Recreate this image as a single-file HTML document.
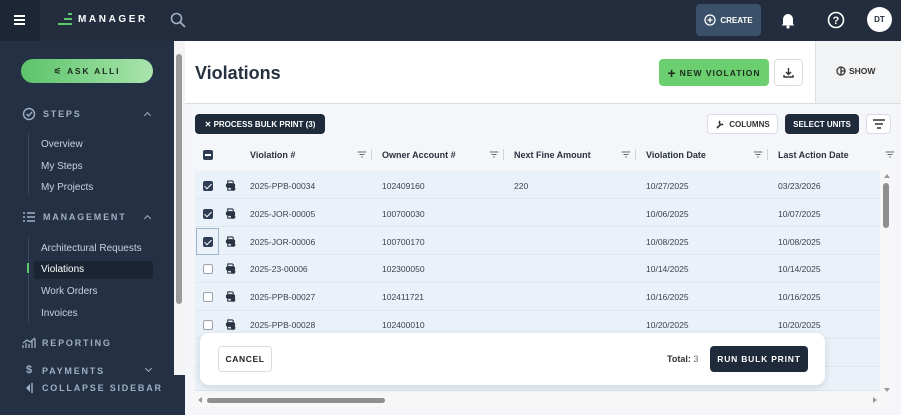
<!DOCTYPE html>
<html><head><style>
*{box-sizing:border-box;margin:0;padding:0}
body{width:901px;height:415px;overflow:hidden;font-family:"Liberation Sans",sans-serif;background:#f4f6f9;position:relative}
.abs{position:absolute}
.top{left:0;top:0;width:901px;height:41px;background:#232d3d}
.side{left:0;top:41px;width:185px;height:374px;background:#243043}
.sb{color:#9fb0c4;font-size:9px;font-weight:bold;letter-spacing:1.8px}
.si{color:#c9d2dd;font-size:10px}
.th{font-size:9px;font-weight:bold;color:#2a3342;top:150px}
.td{font-size:8.5px;color:#3a4250}
.row{left:195px;width:685px;height:28px;background:#eaf1f9;border-bottom:1px solid #dfe6ee}
.cb{width:10px;height:10px;border-radius:2px;left:203px}
.on{background:#2f3e55}
.on::after{content:"";position:absolute;left:3px;top:1px;width:3px;height:6px;border:solid #fff;border-width:0 1.5px 1.5px 0;transform:rotate(45deg)}
.off{border:1px solid #9aa3ae;background:#fff}
.btn{font-weight:bold;font-size:8.5px;display:flex;align-items:center;justify-content:center;border-radius:4px}
.flt{top:150px}
.chev{width:5px;height:5px;border:solid #9fb0c4;border-width:1.5px 0 0 1.5px;transform:rotate(45deg)}
</style></head><body>
<svg width="0" height="0" style="position:absolute"><defs>
<symbol id="pr" viewBox="0 0 12 12"><path d="M3 1h5l1 1v2H3z" fill="none" stroke="#2a3342" stroke-width="1.2"/><rect x="1" y="4" width="10" height="4" rx="1" fill="#2a3342"/><rect x="3" y="8" width="4" height="3" fill="none" stroke="#2a3342" stroke-width="1.2"/><circle cx="9" cy="9.5" r="2.3" fill="#2a3342"/></symbol>
<symbol id="fl" viewBox="0 0 12 10"><path d="M1 2h10M3 5h6M5 8h2" stroke="#666" stroke-width="1.2"/></symbol>
</defs></svg>
<div class="abs top"></div>
<div class="abs" style="left:0;top:0;width:40px;height:41px;background:#1d2635"></div>
<div class="abs" style="left:14px;top:15px;width:11px;height:2px;background:#fff;box-shadow:0 4px #fff,0 8px #fff"></div>
<div class="abs" style="left:58px;top:23px;width:14px;height:2px;background:#5cc96a"></div>
<div class="abs" style="left:64px;top:18px;width:8px;height:2px;background:#5cc96a"></div>
<div class="abs" style="left:68px;top:13px;width:4px;height:2px;background:#5cc96a"></div>
<div class="abs" style="left:78px;top:14px;color:#fff;font-weight:bold;font-size:10px;letter-spacing:2.6px">MANAGER</div>
<svg class="abs" style="left:170px;top:12px" width="16" height="16"><circle cx="6.5" cy="6.5" r="5" fill="none" stroke="#9fb0c4" stroke-width="1.6"/><path d="M10 10l5 5" stroke="#9fb0c4" stroke-width="1.8"/></svg>
<div class="abs btn" style="left:696px;top:4px;width:65px;height:32px;background:#3b5169;color:#fff;font-size:8px"><svg width="12" height="12" style="margin-right:4px"><circle cx="6" cy="6" r="5" fill="none" stroke="#fff" stroke-width="1.3"/><path d="M6 3.5v5M3.5 6h5" stroke="#fff" stroke-width="1.3"/></svg>CREATE</div>
<svg class="abs" style="left:780px;top:11px" width="16" height="18"><path d="M3 13V8a5 5 0 0110 0v5l1.5 1.5h-13z" fill="#fff"/><circle cx="8" cy="16" r="1.6" fill="#fff"/></svg>
<svg class="abs" style="left:827px;top:11px" width="18" height="18"><circle cx="9" cy="9" r="7.5" fill="none" stroke="#fff" stroke-width="1.6"/><text x="9" y="13" font-size="11" font-weight="bold" fill="#fff" text-anchor="middle" font-family="Liberation Sans">?</text></svg>
<div class="abs btn" style="left:867px;top:7px;width:25px;height:25px;border-radius:50%;background:#fff;color:#232d3d;font-size:8px">DT</div>

<div class="abs side"></div>
<div class="abs" style="left:174px;top:41px;width:11px;height:334px;background:#f4f4f4"></div>
<div class="abs" style="left:176px;top:54px;width:6px;height:250px;background:#9a9a9a;border-radius:3px"></div>
<div class="abs btn" style="left:21px;top:59px;width:132px;height:24px;border-radius:12px;background:linear-gradient(90deg,#5cc46a,#a9e4ad);color:#1d2a1e;font-size:8.5px;letter-spacing:1.8px">⚟ ASK ALLI</div>
<svg class="abs" style="left:22px;top:107px" width="14" height="14"><circle cx="7" cy="7" r="5.5" fill="none" stroke="#9fb0c4" stroke-width="1.4"/><path d="M4.5 7l2 2 3.5-4" fill="none" stroke="#9fb0c4" stroke-width="1.4"/></svg>
<div class="abs sb" style="left:43px;top:109px">STEPS</div>
<div class="abs chev" style="left:145px;top:113px"></div>
<div class="abs" style="left:28px;top:133px;width:1px;height:62px;background:#3d4a5c"></div>
<div class="abs si" style="left:41px;top:139px">Overview</div>
<div class="abs si" style="left:41px;top:161px">My Steps</div>
<div class="abs si" style="left:41px;top:182px">My Projects</div>
<svg class="abs" style="left:23px;top:212px" width="12" height="10"><path d="M0 1h2M4 1h8M0 5h2M4 5h8M0 9h2M4 9h8" stroke="#9fb0c4" stroke-width="1.6"/></svg>
<div class="abs sb" style="left:43px;top:212px">MANAGEMENT</div>
<div class="abs chev" style="left:145px;top:216px"></div>
<div class="abs" style="left:28px;top:237px;width:1px;height:86px;background:#3d4a5c"></div>
<div class="abs" style="left:27px;top:263px;width:2px;height:10px;background:#5cc96a"></div>
<div class="abs si" style="left:41px;top:243px">Architectural Requests</div>
<div class="abs" style="left:34px;top:261px;width:119px;height:18px;background:#1b2433;border-radius:3px"></div>
<div class="abs si" style="left:41px;top:264px;color:#fff">Violations</div>
<div class="abs si" style="left:41px;top:286px">Work Orders</div>
<div class="abs si" style="left:41px;top:308px">Invoices</div>
<svg class="abs" style="left:22px;top:337px" width="14" height="12"><path d="M1 11V8M4 11V6M7 11V7M10 11V4M13 11V2M1 6l4-3 3 2 5-4" stroke="#9fb0c4" stroke-width="1.3" fill="none"/></svg>
<div class="abs sb" style="left:42px;top:338px">REPORTING</div>
<div class="abs sb" style="left:26px;top:364px;font-size:11px">$</div>
<div class="abs sb" style="left:42px;top:366px">PAYMENTS</div>
<div class="abs chev" style="left:146px;top:366px;transform:rotate(225deg)"></div>
<svg class="abs" style="left:25px;top:382px" width="8" height="12"><path d="M5 2L1 6l4 4z" fill="#9fb0c4"/><path d="M7 1v10" stroke="#9fb0c4" stroke-width="1.4"/></svg>
<div class="abs sb" style="left:42px;top:383px">COLLAPSE SIDEBAR</div>

<div class="abs" style="left:185px;top:41px;width:630px;height:63px;background:#fff;border-bottom:1px solid #d9dde3"></div>
<div class="abs" style="left:815px;top:41px;width:86px;height:63px;background:#f2f3f5;border-left:1px solid #dcdfe4;border-bottom:1px solid #d9dde3"></div>
<div class="abs" style="left:195px;top:63px;font-size:18px;font-weight:bold;color:#263140">Violations</div>
<div class="abs btn" style="left:659px;top:59px;width:110px;height:27px;background:#6ccf6f;color:#1e2a20;letter-spacing:1px"><span style="font-size:14px;margin-right:3px">+</span>NEW VIOLATION</div>
<div class="abs btn" style="left:774px;top:59px;width:29px;height:27px;background:#fff;border:1px solid #d9dde3"><svg width="11" height="11"><path d="M5.5 1v6M3 5l2.5 2.5L8 5M1 8v2h9V8" stroke="#333" stroke-width="1.4" fill="none"/></svg></div>
<div class="abs btn" style="left:836px;top:66px;color:#333"><svg width="10" height="10" style="margin-right:3px"><circle cx="5" cy="5" r="4" fill="none" stroke="#333" stroke-width="1.3"/><path d="M5 1v8M5 5h4" stroke="#333" stroke-width="1.3"/></svg>SHOW</div>

<div class="abs btn" style="left:195px;top:114px;width:130px;height:20px;background:#1f2a3a;color:#fff;font-size:8px">✕ PROCESS BULK PRINT (3)</div>
<div class="abs btn" style="left:707px;top:114px;width:71px;height:20px;background:#fff;border:1px solid #d9dde3;color:#333;font-size:8px"><svg width="10" height="10" style="margin-right:4px"><path d="M2 9l4-4M5 2a2 2 0 103 3" stroke="#333" stroke-width="1.6" fill="none"/></svg>COLUMNS</div>
<div class="abs btn" style="left:785px;top:114px;width:74px;height:20px;background:#1f2a3a;color:#fff;font-size:8px">SELECT UNITS</div>
<div class="abs btn" style="left:866px;top:114px;width:25px;height:20px;background:#fff;border:1px solid #d9dde3"><svg width="12" height="10"><path d="M0 1h12M2 5h8M4 9h4" stroke="#333" stroke-width="1.4"/></svg></div>

<div class="abs" style="left:203px;top:150px;width:10px;height:10px;background:#2f3e55;border-radius:2px"><div style="margin:4px 2px;height:2px;background:#fff"></div></div>
<div class="abs th" style="left:250px">Violation #</div>
<div class="abs th" style="left:382px">Owner Account #</div>
<div class="abs th" style="left:514px">Next Fine Amount</div>
<div class="abs th" style="left:646px">Violation Date</div>
<div class="abs th" style="left:778px">Last Action Date</div>
<svg class="abs flt" style="left:357px" width="10" height="9"><use href="#fl"/></svg><div class="abs" style="left:371px;top:149px;width:1px;height:11px;background:#d0d5dc"></div>
<svg class="abs flt" style="left:489px" width="10" height="9"><use href="#fl"/></svg><div class="abs" style="left:503px;top:149px;width:1px;height:11px;background:#d0d5dc"></div>
<svg class="abs flt" style="left:621px" width="10" height="9"><use href="#fl"/></svg><div class="abs" style="left:635px;top:149px;width:1px;height:11px;background:#d0d5dc"></div>
<svg class="abs flt" style="left:753px" width="10" height="9"><use href="#fl"/></svg><div class="abs" style="left:767px;top:149px;width:1px;height:11px;background:#d0d5dc"></div>
<svg class="abs flt" style="left:885px" width="10" height="9"><use href="#fl"/></svg>

<div class="abs row" style="top:171px"></div>
<div class="abs row" style="top:199px"></div>
<div class="abs row" style="top:227px"></div>
<div class="abs row" style="top:255px"></div>
<div class="abs row" style="top:283px"></div>
<div class="abs row" style="top:311px"></div>
<div class="abs row" style="top:339px"></div>
<div class="abs row" style="top:367px;height:24px"></div>
<div class="abs" style="left:196px;top:228px;width:23px;height:27px;border:1px solid #9db5cf"></div>

<div class="abs cb on" style="top:181px"></div>
<div class="abs cb on" style="top:209px"></div>
<div class="abs cb on" style="top:237px"></div>
<div class="abs cb off" style="top:264px"></div>
<div class="abs cb off" style="top:292px"></div>
<div class="abs cb off" style="top:320px"></div>
<svg class="abs" style="left:225px;top:180px" width="11" height="11"><use href="#pr"/></svg>
<svg class="abs" style="left:225px;top:208px" width="11" height="11"><use href="#pr"/></svg>
<svg class="abs" style="left:225px;top:236px" width="11" height="11"><use href="#pr"/></svg>
<svg class="abs" style="left:225px;top:263px" width="11" height="11"><use href="#pr"/></svg>
<svg class="abs" style="left:225px;top:291px" width="11" height="11"><use href="#pr"/></svg>
<svg class="abs" style="left:225px;top:319px" width="11" height="11"><use href="#pr"/></svg>

<div class="abs td" style="left:250px;top:181px">2025-PPB-00034</div><div class="abs td" style="left:382px;top:181px">102409160</div><div class="abs td" style="left:514px;top:181px">220</div><div class="abs td" style="left:646px;top:181px">10/27/2025</div><div class="abs td" style="left:778px;top:181px">03/23/2026</div>
<div class="abs td" style="left:250px;top:209px">2025-JOR-00005</div><div class="abs td" style="left:382px;top:209px">100700030</div><div class="abs td" style="left:646px;top:209px">10/06/2025</div><div class="abs td" style="left:778px;top:209px">10/07/2025</div>
<div class="abs td" style="left:250px;top:237px">2025-JOR-00006</div><div class="abs td" style="left:382px;top:237px">100700170</div><div class="abs td" style="left:646px;top:237px">10/08/2025</div><div class="abs td" style="left:778px;top:237px">10/08/2025</div>
<div class="abs td" style="left:250px;top:264px">2025-23-00006</div><div class="abs td" style="left:382px;top:264px">102300050</div><div class="abs td" style="left:646px;top:264px">10/14/2025</div><div class="abs td" style="left:778px;top:264px">10/14/2025</div>
<div class="abs td" style="left:250px;top:292px">2025-PPB-00027</div><div class="abs td" style="left:382px;top:292px">102411721</div><div class="abs td" style="left:646px;top:292px">10/16/2025</div><div class="abs td" style="left:778px;top:292px">10/16/2025</div>
<div class="abs td" style="left:250px;top:320px">2025-PPB-00028</div><div class="abs td" style="left:382px;top:320px">102400010</div><div class="abs td" style="left:646px;top:320px">10/20/2025</div><div class="abs td" style="left:778px;top:320px">10/20/2025</div>

<div class="abs" style="left:880px;top:171px;width:12px;height:222px;background:#f7f7f7"></div>
<div class="abs" style="left:883px;top:183px;width:6px;height:45px;background:#8f8f8f;border-radius:3px"></div>
<div class="abs" style="left:884px;top:174px;width:0;height:0;border:3px solid transparent;border-bottom:4px solid #999;border-top:0"></div>
<div class="abs" style="left:884px;top:388px;width:0;height:0;border:3px solid transparent;border-top:4px solid #999;border-bottom:0"></div>
<div class="abs" style="left:195px;top:393px;width:697px;height:14px;background:#f7f7f7"></div>
<div class="abs" style="left:207px;top:398px;width:178px;height:5px;background:#8f8f8f;border-radius:3px"></div>
<div class="abs" style="left:198px;top:397px;width:0;height:0;border:3px solid transparent;border-right:4px solid #999;border-left:0"></div>
<div class="abs" style="left:873px;top:397px;width:0;height:0;border:3px solid transparent;border-left:4px solid #999;border-right:0"></div>

<div class="abs" style="left:200px;top:333px;width:625px;height:52px;background:#fff;border-radius:9px;box-shadow:0 2px 8px rgba(0,0,0,.12)"></div>
<div class="abs btn" style="left:218px;top:346px;width:54px;height:26px;background:#fff;border:1px solid #d9dde3;color:#222;letter-spacing:.6px">CANCEL</div>
<div class="abs" style="left:667px;top:354px;font-size:9px;font-weight:bold;color:#333">Total: <span style="font-weight:normal;color:#666">3</span></div>
<div class="abs btn" style="left:710px;top:346px;width:98px;height:26px;background:#1f2a3a;color:#fff;letter-spacing:.8px">RUN BULK PRINT</div>
</body></html>
